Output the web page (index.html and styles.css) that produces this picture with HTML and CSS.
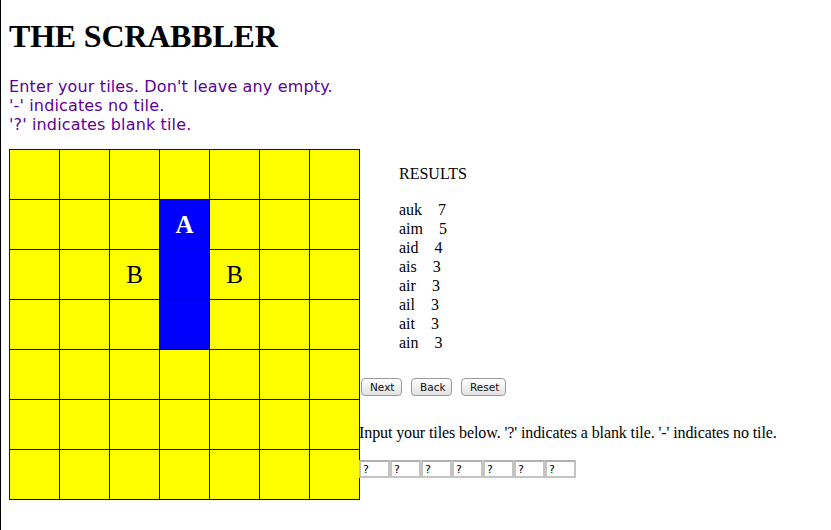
FILE: index.html
```html
<!DOCTYPE html>
<html>
<head>
<meta charset="utf-8">
<title>The Scrabbler</title>
<link rel="stylesheet" href="styles.css">
</head>
<body>
<h1 class="title">THE SCRABBLER</h1>
<p class="intro">Enter your tiles. Don't leave any empty.<br>'-' indicates no tile.<br>'?' indicates blank tile.</p>
<div class="main">
  <div class="board">
    <div class="cell"></div><div class="cell"></div><div class="cell"></div><div class="cell"></div><div class="cell"></div><div class="cell"></div><div class="cell"></div>
    <div class="cell"></div><div class="cell"></div><div class="cell"></div><div class="cell blue"><span class="letter-a">A</span></div><div class="cell"></div><div class="cell"></div><div class="cell"></div>
    <div class="cell"></div><div class="cell"></div><div class="cell"><span class="letter-b">B</span></div><div class="cell blue"></div><div class="cell"><span class="letter-b">B</span></div><div class="cell"></div><div class="cell"></div>
    <div class="cell"></div><div class="cell"></div><div class="cell"></div><div class="cell blue"></div><div class="cell"></div><div class="cell"></div><div class="cell"></div>
    <div class="cell"></div><div class="cell"></div><div class="cell"></div><div class="cell"></div><div class="cell"></div><div class="cell"></div><div class="cell"></div>
    <div class="cell"></div><div class="cell"></div><div class="cell"></div><div class="cell"></div><div class="cell"></div><div class="cell"></div><div class="cell"></div>
    <div class="cell"></div><div class="cell"></div><div class="cell"></div><div class="cell"></div><div class="cell"></div><div class="cell"></div><div class="cell"></div>
  </div>
  <div class="side">
    <div class="results">
      <div class="results-head">RESULTS</div>
      <div class="results-list">
        <div>auk&nbsp;&nbsp;&nbsp; 7</div>
        <div>aim&nbsp;&nbsp;&nbsp; 5</div>
        <div>aid&nbsp;&nbsp;&nbsp; 4</div>
        <div>ais&nbsp;&nbsp;&nbsp; 3</div>
        <div>air&nbsp;&nbsp;&nbsp; 3</div>
        <div>ail&nbsp;&nbsp;&nbsp; 3</div>
        <div>ait&nbsp;&nbsp;&nbsp; 3</div>
        <div>ain&nbsp;&nbsp;&nbsp; 3</div>
      </div>
    </div>
    <div class="buttons">
      <button class="btn btn-next">Next</button>
      <button class="btn btn-back">Back</button>
      <button class="btn btn-reset">Reset</button>
    </div>
    <div class="hint">Input your tiles below. '?' indicates a blank tile. '-' indicates no tile.</div>
    <div class="tiles">
      <input class="tile" type="text" value="?"><input class="tile" type="text" value="?"><input class="tile" type="text" value="?"><input class="tile" type="text" value="?"><input class="tile" type="text" value="?"><input class="tile" type="text" value="?"><input class="tile" type="text" value="?">
    </div>
  </div>
</div>
</body>
</html>
```
FILE: styles.css
```css
html {
  border-left: 1px solid #000;
  min-height: 100%;
  box-sizing: border-box;
  background: #fff;
}
body {
  margin: 0;
  padding: 0 8px;
  font-family: "Liberation Serif", "Times New Roman", serif;
  font-size: 16px;
  color: #000;
}
.title {
  margin: 18px 0 0 0;
  font-size: 32px;
  line-height: 36px;
  font-weight: bold;
  letter-spacing: -0.2px;
}
.intro {
  margin: 23px 0 0 0;
  font-family: "DejaVu Sans", Verdana, sans-serif;
  font-size: 16px;
  line-height: 19px;
  letter-spacing: 0.15px;
  color: #5c0099;
}
.main {
  display: flex;
  align-items: flex-start;
  margin-top: 15px;
}
.board {
  display: grid;
  grid-template-columns: repeat(7, 49px);
  grid-auto-rows: 49px;
  gap: 1px;
  border: 1px solid #111;
  background: #111;
  flex: none;
}
.cell {
  background: #ffff00;
  display: flex;
  align-items: center;
  justify-content: center;
}
.cell.blue {
  background: #0000ff;
}
.letter-a {
  color: #fff;
  font-weight: bold;
  font-size: 25px;
}
.letter-b {
  color: #000;
  font-size: 25px;
}
.side {
  display: flex;
  flex-direction: column;
  align-items: flex-start;
  line-height: 19px;
}
.results {
  margin: 15px 0 0 39px;
}
.results-list {
  margin-top: 17px;
}
.buttons {
  display: flex;
  gap: 9px;
  margin: 26px 0 0 1px;
}
.btn {
  height: 18px;
  padding: 0 8px;
  font-family: "DejaVu Sans", "Lucida Grande", sans-serif;
  font-size: 10.5px;
  color: #111;
  background: linear-gradient(#ffffff, #f0f0f0 50%, #e2e2e2);
  border: 1px solid #9a9a9a;
  border-radius: 4px;
  line-height: 16px;
}
.btn-next { width: 41px; }
.btn-back { width: 41px; }
.btn-reset { width: 45px; }
.hint {
  margin-top: 27px;
  margin-left: -1px;
  white-space: nowrap;
  letter-spacing: -0.1px;
}
.tiles {
  display: flex;
  margin-top: 18px;
  margin-left: -1px;
}
.tile {
  width: 31px;
  height: 18px;
  box-sizing: border-box;
  margin: 0;
  padding: 0 0 0 2px;
  border: 2px solid #c4c4c4;
  border-top-color: #b0b0b0;
  font-family: "DejaVu Sans", sans-serif;
  font-size: 11px;
  color: #000;
  background: #fff;
}
```
